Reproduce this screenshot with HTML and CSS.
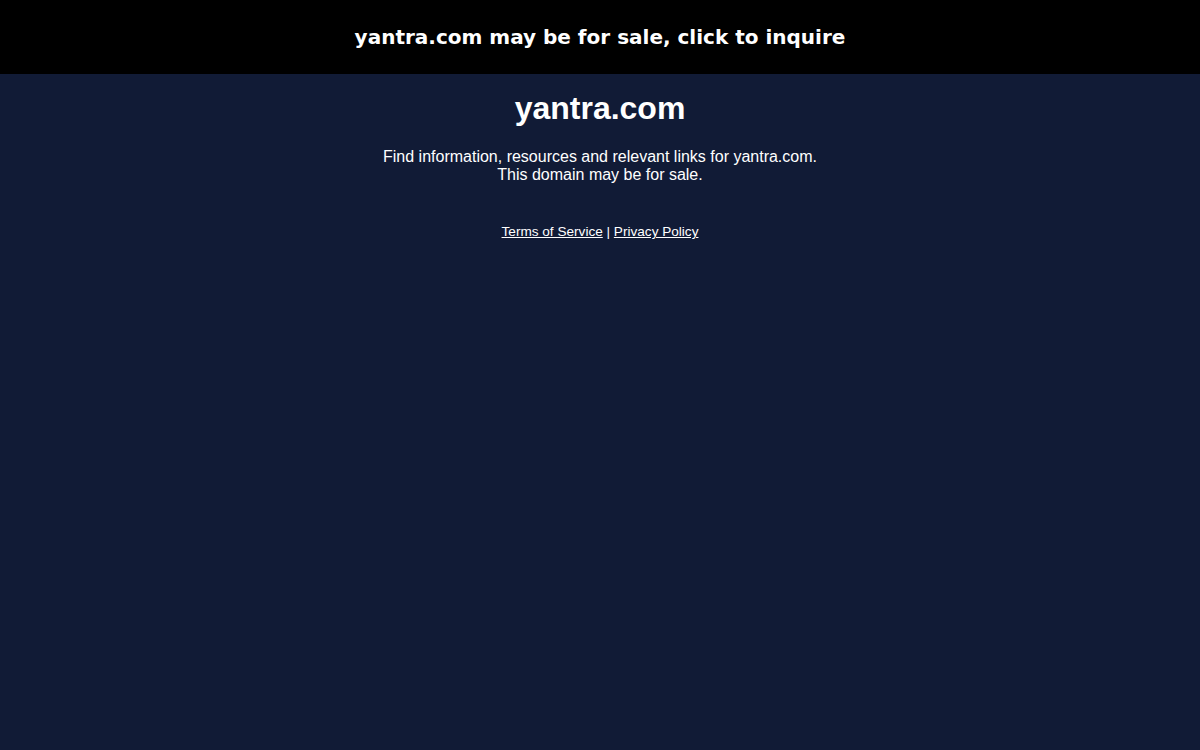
FILE: index.html
```html
<!DOCTYPE html>
<html>
<head>
<meta charset="utf-8">
<link rel="stylesheet" href="styles.css">
</head>
<body>
<div class="banner"><a class="banner-link" href="#">yantra.com may be for sale, click to inquire</a></div>
<main class="content">
<h1 class="title">yantra.com</h1>
<p class="desc">Find information, resources and relevant links for yantra.com.<br>This domain may be for sale.</p>
<div class="legal"><a href="#">Terms of Service</a> | <a href="#">Privacy Policy</a></div>
</main>
</body>
</html>
```
FILE: styles.css
```css
html, body {
  margin: 0;
  padding: 0;
  height: 100%;
}
body {
  background: #111b36;
  color: #ffffff;
  font-family: "Liberation Sans", Arial, sans-serif;
}
.banner {
  background: #000000;
  height: 74px;
  display: flex;
  align-items: center;
  justify-content: center;
}
.banner-link {
  color: #ffffff;
  text-decoration: none;
  font-family: "DejaVu Sans", sans-serif;
  font-weight: bold;
  font-size: 20px;
}
.content {
  text-align: center;
}
.title {
  font-size: 32px;
  font-weight: bold;
  margin: 16px 0 0;
  line-height: 36px;
}
.desc {
  font-size: 16px;
  line-height: 18px;
  margin: 22px 0 0;
}
.legal {
  font-size: 13.6px;
  line-height: 16px;
  margin-top: 40px;
}
.legal a {
  color: #ffffff;
  text-decoration: underline;
}
```
